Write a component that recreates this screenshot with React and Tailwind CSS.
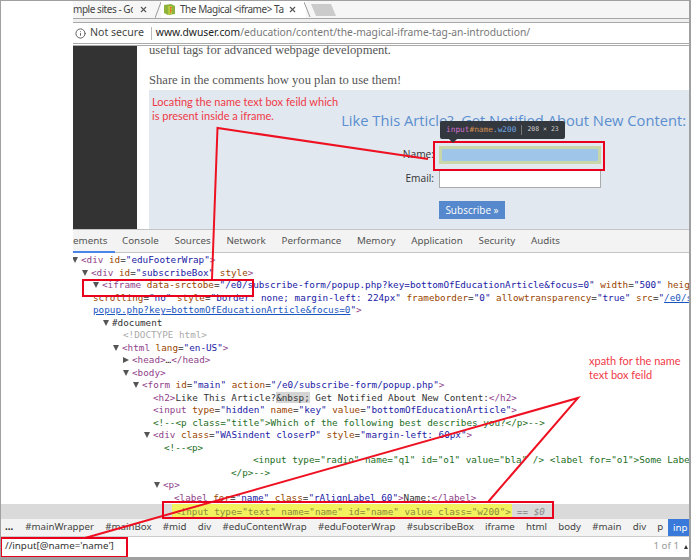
import React from "react";
import { X, Info } from "lucide-react";

const T = ({ children }) => <span className="text-[#8f3f8a]">{children}</span>;
const A = ({ children }) => <span className="text-[#994500]">{children}</span>;
const V = ({ children }) => <span className="text-[#1a1aa6]">{children}</span>;
const C = ({ children }) => <span className="text-[#236e25]">{children}</span>;
const U = ({ children }) => <span className="text-[#1a55c0] underline">{children}</span>;

const Down = () => <span className="absolute left-[-9px] top-[3px] w-0 h-0 border-x-[3.5px] border-x-transparent border-t-[6px] border-t-[#555]" />;
const Right = () => <span className="absolute left-[-9px] top-[3px] w-0 h-0 border-y-[3.5px] border-y-transparent border-l-[6px] border-l-[#555]" />;

const Line = ({ x, open, closed, children }) => (
  <div className="h-[12.5px] leading-[12.5px] whitespace-nowrap" style={{ paddingLeft: x }}>
    <span className="relative">
      {open && <Down />}
      {closed && <Right />}
      {children}
    </span>
  </div>
);

const crumbs = ["#mainWrapper", "#mainBox", "#mid", "div", "#eduContentWrap", "#eduFooterWrap", "#subscribeBox", "iframe", "html", "body", "#main", "div", "p"];
const devTabs = ["Console", "Sources", "Network", "Performance", "Memory", "Application", "Security", "Audits"];

const TabBar = () => (
  <div className="h-[22px] flex flex-col">
    <div className="h-[17px] flex items-center bg-[#f6f6f6] font-['Noto_Sans'] text-[10px] tracking-[-0.45px] text-[#444]">
      <span className="w-[60px] overflow-hidden whitespace-nowrap">mple sites - Go</span>
      <X className="ml-[6px] w-[9px] h-[9px] text-[#555]" strokeWidth={3} />
      <svg width="6" height="17" className="ml-[7px]">
        <path d="M0 17 L6 1" stroke="#999" fill="none" />
      </svg>
      <div className="h-full w-[145px] flex items-center bg-white">
        <svg width="13" height="13" viewBox="0 0 13 13" className="ml-[2px]">
          <path d="M1 2 L8 1 L12 3 V11 L5 12 L1 10 Z" fill="#8db33c" />
          <path d="M5 3 H9 V11 L5 12 Z" fill="#b5c93f" />
          <path d="M7 4 H9 V5 H8 V7 H9 V8 H8 V10 H7 Z" fill="#e8782a" />
        </svg>
        <span className="ml-[4px] w-[104px] whitespace-nowrap">The Magical &lt;iframe&gt; Ta</span>
        <X className="ml-[4px] w-[9px] h-[9px] text-[#555]" strokeWidth={3} />
      </div>
      <svg width="34" height="17" className="-ml-[2px]">
        <path d="M0 1 L6 16" stroke="#999" fill="none" />
        <path d="M7 3 H27 L32 15 H12 Z" fill="#cbcbcb" />
      </svg>
    </div>
    <div className="h-[5px] bg-[#efefef] border-y border-[#a8a8a8]" />
  </div>
);

const AddressBar = () => (
  <div className="h-[23px] flex flex-col">
    <div className="h-[20px] flex items-center bg-white font-['Noto_Sans'] text-[10.6px]">
      <Info className="ml-[2px] w-[11px] h-[11px] text-[#555]" strokeWidth={2} />
      <span className="ml-[4px] text-[#444]">Not secure</span>
      <span className="ml-[7px] w-px h-[13px] bg-[#bbb]" />
      <span className="ml-[4px] text-[10.3px] text-[#222] whitespace-nowrap">www.dwuser.com<span className="text-[#777]">/education/content/the-magical-iframe-tag-an-introduction/</span></span>
    </div>
    <div className="h-[3px] bg-white border-y border-[#aaa]" />
  </div>
);

const Page = () => (
  <div className="h-[183px] flex overflow-hidden">
    <div className="w-[64px] bg-[#333]" />
    <div className="flex-1 pl-[12px] bg-white flex flex-col overflow-hidden">
      <div className="-mt-[5px] font-['Liberation_Serif'] text-[12.6px] leading-[18px] text-[#555]">
        <p>useful tags for advanced webpage development.</p>
        <p className="mt-[12px]">Share in the comments how you plan to use them!</p>
      </div>
      <div className="mt-[1px] flex-1 bg-[#e1e8f0] pt-[20px] font-['Open_Sans']">
        <h2 className="h-[20px] leading-[20px] text-right pr-[3px] text-[14.7px] text-[#5b8fcf] whitespace-nowrap">Like This Article?&nbsp; Get Notified About New Content:</h2>
        <div className="mt-[16px] flex items-center h-[18px]">
          <label className="w-[285px] text-right text-[10.2px] text-[#333]">Name:</label>
          <div className="ml-[5px] w-[162px] h-[18px] border-[3px] border-[#c9d7a8] bg-[#9fc5e8]" />
        </div>
        <div className="mt-[6px] flex items-center h-[18px]">
          <label className="w-[285px] text-right text-[10.2px] text-[#333]">Email:</label>
          <div className="ml-[5px] w-[162px] h-[18px] border border-[#aaa] bg-white" />
        </div>
        <div className="mt-[13px] ml-[290px] w-[66px] h-[18px] bg-[#5588cc] text-white text-[10px] leading-[18px] text-center">Subscribe »</div>
      </div>
    </div>
  </div>
);

const DevTabs = () => (
  <div className="h-[24px] flex bg-[#f3f3f3] border-y border-[#c4c4c4] font-['Noto_Sans'] text-[9.8px] text-[#555]">
    <div className="w-[42px] h-[23px] leading-[22px] border-b-2 border-[#4a86e8] whitespace-nowrap">ements</div>
    <div className="ml-[7px] flex gap-[15.7px] leading-[22px]">
      {devTabs.map((t) => <span key={t}>{t}</span>)}
    </div>
  </div>
);

const Tree = () => (
  <div className="h-[251px] bg-white pt-[1.25px] overflow-hidden font-['DejaVu_Sans_Mono'] text-[9.3px] text-[#333]">
    <Line x={8} open><T>&lt;div</T> <A>id</A>=<V>"eduFooterWrap"</V><T>&gt;</T></Line>
    <Line x={18} open><T>&lt;div</T> <A>id</A>=<V>"subscribeBox"</V> <A>style</A><T>&gt;</T></Line>
    <Line x={29} open><T>&lt;iframe</T> <A>data-srctobe</A>=<V>"/e0/subscribe-form/popup.php?key=bottomOfEducationArticle&amp;focus=0"</V> <A>width</A>=<V>"500"</V> <A>heigh</A></Line>
    <Line x={20}><A>scrolling</A>=<V>"no"</V> <A>style</A>=<V>"border: none; margin-left: 224px"</V> <A>frameborder</A>=<V>"0"</V> <A>allowtransparency</A>=<V>"true"</V> <A>src</A>=<V>"</V><U>/e0/s</U></Line>
    <Line x={20}><U>popup.php?key=bottomOfEducationArticle&amp;focus=0</U><V>"</V><T>&gt;</T></Line>
    <Line x={39} open>#document</Line>
    <Line x={50}><span className="text-[#aaa]">&lt;!DOCTYPE html&gt;</span></Line>
    <Line x={49} open><T>&lt;html</T> <A>lang</A>=<V>"en-US"</V><T>&gt;</T></Line>
    <Line x={59} closed><T>&lt;head&gt;</T>…<T>&lt;/head&gt;</T></Line>
    <Line x={59} open><T>&lt;body&gt;</T></Line>
    <Line x={69} open><T>&lt;form</T> <A>id</A>=<V>"main"</V> <A>action</A>=<V>"/e0/subscribe-form/popup.php"</V><T>&gt;</T></Line>
    <Line x={80}><T>&lt;h2&gt;</T>Like This Article?<span className="bg-[#d4d4d4]">&amp;nbsp;</span> Get Notified About New Content:<T>&lt;/h2&gt;</T></Line>
    <Line x={80}><T>&lt;input</T> <A>type</A>=<V>"hidden"</V> <A>name</A>=<V>"key"</V> <A>value</A>=<V>"bottomOfEducationArticle"</V><T>&gt;</T></Line>
    <Line x={80}><C>&lt;!--&lt;p class="title"&gt;Which of the following best describes you?&lt;/p&gt;--&gt;</C></Line>
    <Line x={80} open><T>&lt;div</T> <A>class</A>=<V>"WASindent closerP"</V> <A>style</A>=<V>"margin-left: 60px"</V><T>&gt;</T></Line>
    <Line x={91}><C>&lt;!--&lt;p&gt;</C></Line>
    <Line x={180}><C>&lt;input type="radio" name="q1" id="o1" value="bla" /&gt; &lt;label for="o1"&gt;Some Labe</C></Line>
    <Line x={158}><C>&lt;/p&gt;--&gt;</C></Line>
    <Line x={90} open><T>&lt;p&gt;</T></Line>
    <Line x={101}><T>&lt;label</T> <A>for</A>=<V>"name"</V> <A>class</A>=<V>"rAlignLabel_60"</V><T>&gt;</T>Name:<T>&lt;/label&gt;</T></Line>
  </div>
);

const Bottom = () => (
  <>
    <div className="h-[15px] bg-[#dadada] flex items-center pl-[171px] font-['DejaVu_Sans_Mono'] text-[9.3px] whitespace-nowrap">
      <span className="pl-[3px] pr-[1px] bg-[#f2f25e] text-[#8a8a3c] leading-[15px]">&lt;input type="text" name="name" id="name" value class="w200"&gt;</span>
      <span className="ml-[5px] italic text-[#888]">== $0</span>
    </div>
    <div className="h-[18px] bg-[#f3f3f3] flex items-center overflow-hidden font-['Noto_Sans'] text-[9.7px] text-[#444] whitespace-nowrap border-b border-[#ccc]">
      <span className="ml-[4px] font-bold text-[#222]">...</span>
      <div className="ml-[12px] flex gap-[11.25px]">
        {crumbs.map((c, i) => <span key={i}>{c}</span>)}
      </div>
      <span className="ml-auto w-[21px] h-full pl-[5px] bg-[#3879d9] text-white leading-[17px] overflow-hidden shrink-0">inp</span>
    </div>
    <div className="h-[19px] bg-white flex items-center font-['Noto_Sans'] text-[9.8px] text-[#333]">
      <span className="ml-[4px]">//input[@name='name']</span>
      <span className="ml-auto mr-[5px] text-[#999]">1 of 1</span>
      <span className="w-0 h-0 mr-[1px] border-x-[2px] border-x-transparent border-b-[4px] border-b-[#333]" />
    </div>
  </>
);

const Annotations = () => (
  <div className="absolute left-[-1px] top-[-1px] w-[691px] h-[560px] pointer-events-none">
    <svg width="691" height="560" className="absolute inset-0">
      <path d="M212 279 L217.5 128 L428 159" stroke="#ee1122" strokeWidth="2" fill="none" />
      <path d="M85 538 L578 398 L488 502" stroke="#ee1122" strokeWidth="2" fill="none" />
    </svg>
    <div className="absolute left-[433px] top-[141px] w-[172px] h-[30px] border-2 border-[#e8001c]" />
    <div className="absolute left-[82px] top-[279px] w-[172px] h-[18px] border-2 border-[#e8001c]" />
    <div className="absolute left-[162px] top-[501px] w-[392px] h-[18px] border-2 border-[#e8001c]" />
    <div className="absolute left-0 top-[537px] w-[128px] h-[21px] border-2 border-[#e8001c]" />

    <div className="absolute left-[152px] top-[95px] font-['Lato'] text-[11px] leading-[14px] text-[#f03a47] whitespace-nowrap">
      Locating the name text box feild which<br />is present inside a iframe.
    </div>
    <div className="absolute left-[589px] top-[354px] font-['Lato'] text-[11px] leading-[14px] text-[#f03a47] whitespace-nowrap">
      xpath for the name<br />text box feild
    </div>

    <div className="absolute left-[440px] top-[121px] w-[125px] h-[18px] rounded-[2px] bg-[#33373e] flex items-center pl-[6px] font-['DejaVu_Sans_Mono'] text-[7.8px] whitespace-nowrap">
      <span className="text-[#d070d0]">input</span>
      <span className="text-[#d09050]">#name</span>
      <span className="text-[#70a8e0]">.w200</span>
      <span className="ml-[5px] w-px h-[10px] bg-[#777]" />
      <span className="ml-[5px] text-[6.5px] text-[#ccc]">208 × 23</span>
    </div>
    <div className="absolute left-[449px] top-[139px] w-0 h-0 border-x-[4px] border-x-transparent border-t-[4px] border-t-[#33373e]" />
  </div>
);

export default function App() {
  return (
    <div className="relative w-[691px] h-[560px] bg-white overflow-hidden border-t border-l border-r-2 border-b-[3px] border-[#a0a0a0] font-['Open_Sans']">
      <div className="flex">
        <div className="w-[72px] bg-white shrink-0" />
        <div className="flex-1 min-w-0">
          <TabBar />
          <AddressBar />
          <Page />
          <DevTabs />
          <Tree />
        </div>
      </div>
      <Bottom />
      <Annotations />
    </div>
  );
}
